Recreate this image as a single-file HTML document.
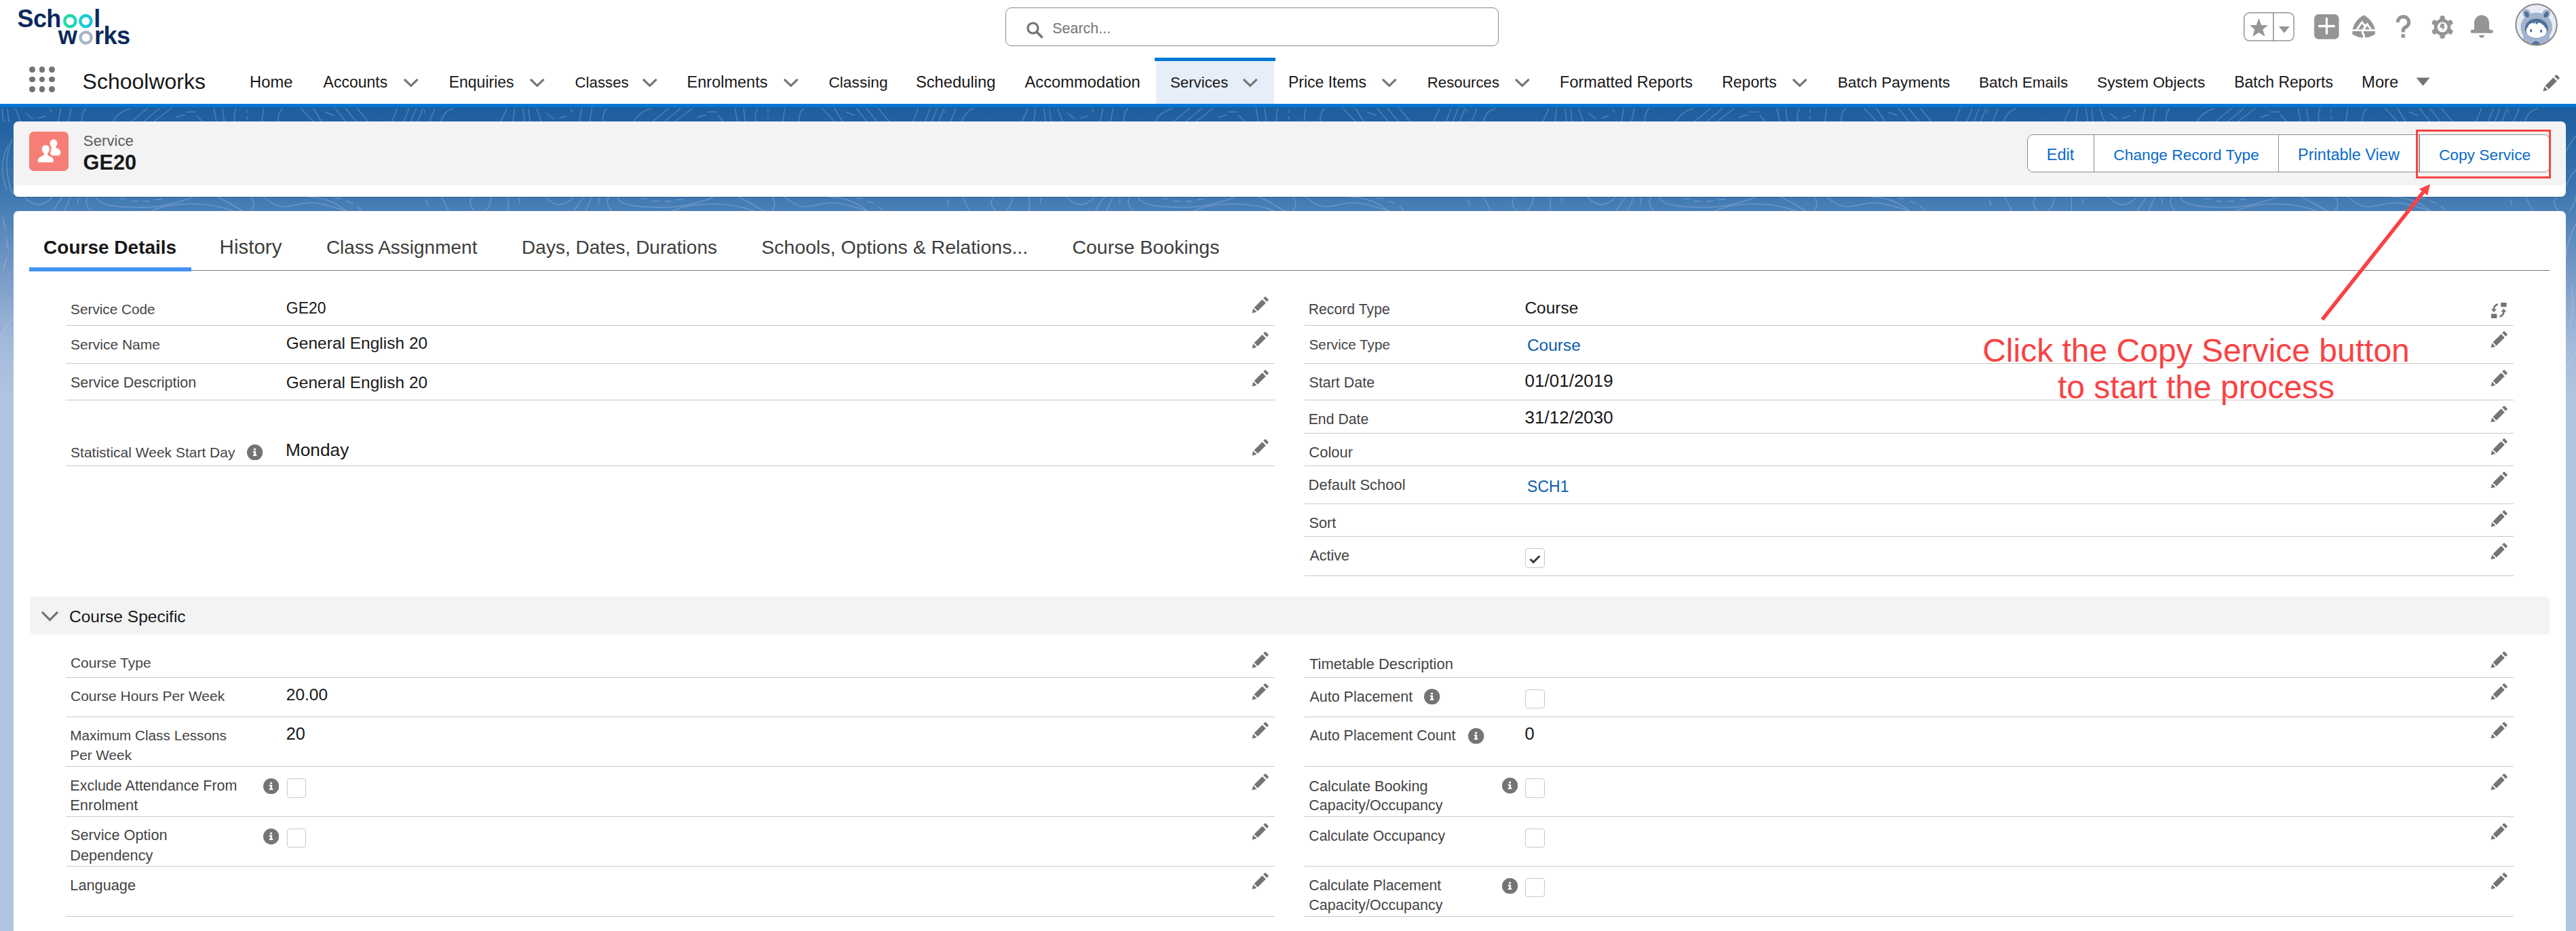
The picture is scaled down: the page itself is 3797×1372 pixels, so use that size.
<!DOCTYPE html>
<html><head><meta charset="utf-8"><title>Service GE20</title>
<style>
html,body{margin:0;padding:0;width:3797px;height:1372px;overflow:hidden;background:#b0c4df;font-family:"Liberation Sans",sans-serif}
.a{position:absolute}
.t{position:absolute;white-space:nowrap;line-height:1}
</style></head><body>
<div class="a" style="left:0;top:158px;width:3797px;height:1214px;background:linear-gradient(180deg,#1d5e9f 0px,#2463a3 30px,#3873ae 110px,#497fb6 150px,#7a9cc8 250px,#a3badb 350px,#b0c4df 420px,#b0c4df 1214px)"></div>
<svg class="a" style="left:0;top:0" width="3797" height="1372" viewBox="0 0 3797 1372"><defs><pattern id="topo" patternUnits="userSpaceOnUse" x="0" y="0" width="768" height="1372"><path d="M3 160 L5 179 M11 161 L13 179 M23 160 L30 179 M38 167 L48 175 M57 174 L67 171 M73 161 L76 165 M89.6 160 L85.8 179 M104.7 160 L101 179 M126 160 Q119 170 121 179 M191.8 160 Q174 165 166.5 179 M217 160 L194 179 M234.7 160 L212 179 M252 160 L227 179 M260 173 L272 169 M275 165 L288 165 M290 170 L298 179 M315.4 160 L319 179 M328 160 L330.6 179 M348 160 Q344 170 346 179 M364 162 L364 166 M364 172 L364 176 M388.6 160 L386 179 M416 160 Q409 168 410 179 M444 160 L462 179 M462 160 L474 179 M479 165 L492 170 M494.6 160 L509.7 179 M509.7 160 L524.8 179 M527 160 L542.5 179 M585.4 160 L577.8 179 M603 160 L595.5 179 M613.2 160 L605.6 179 M623.3 160 L615.7 179 M626 162 L625.5 166 M641 160 L633.3 179 M667.7 160 Q655 163 650 179 M747.1 160 L738.3 179 M758.5 160 L756 179 M35.8 290 Q56.7 313 77.5 290 M79 310 Q86 298 92.4 290 M95.4 310 L104.4 290 M114.8 292 L114.6 301 M129.7 290 Q123 300 134.2 311 M141.6 290 C145 300 160 305 200 305.5 C230 306 250 303 283 291 M177 292.7 L186 292.7 M193.8 296.4 L202.7 296.4 M211.7 296.4 L220.6 296.4 M229.6 294.2 L238.5 293.5 M223.6 311 C240 303 262 300.5 283 300.5 C305 300.5 325 304 343 311 M320.5 290 Q340 300 357.8 311 M369.7 290 Q378 300 369.7 311 M388.5 290 C400 300 410 304.6 418.3 304.6 C428 304.6 436 300.9 455.6 298.7 C470 298 490 304 510.7 311 M454 290 C470 291 490 294 510.7 311 M494 292 L503 292.5 M510.7 296.4 L519.7 299.4 M527 304.6 L533 309.9 M628.5 295 L630.7 303 M650.8 290 L661.3 311 M697 290 Q688 300 700 311 M724 290 Q724 302 715 311 M749.2 290 L749.2 311 M765.6 293 L765.8 299" fill="none" stroke="rgba(205,222,242,0.26)" stroke-width="1.5" stroke-linecap="round"/></pattern></defs><rect x="0" y="156" width="3797" height="160" fill="url(#topo)"/><path d="M18 205 Q2 240 18 285 M12 214 Q-4 245 10 280 M4 320 L8 340 M9 350 L12 368 M10 380 L5 398 M20 470 Q8 480 0 498 M3797 200 Q3785 215 3778 232 M3797 250 Q3786 262 3780 280 M3797 330 Q3784 352 3782 380 M3790 420 Q3795 450 3788 480 M3797 520 Q3788 530 3781 545" fill="none" stroke="rgba(205,222,242,0.28)" stroke-width="1.5"/></svg>
<div class="a" style="left:0;top:0;width:3797px;height:158px;background:#fff"></div>
<div class="t" style="left:25.5px;top:10.0px;font-size:36.0px;color:#0b2a5a;font-weight:700;letter-spacing:-0.6px">Sch</div>
<div class="t" style="left:138.2px;top:10.0px;font-size:36.0px;color:#0b2a5a;font-weight:700;">l</div>
<div class="t" style="left:85.8px;top:35.0px;font-size:36.25px;color:#0b2a5a;font-weight:700;">w</div>
<div class="t" style="left:139.0px;top:35.0px;font-size:36.25px;color:#0b2a5a;font-weight:700;letter-spacing:-0.6px">rks</div>
<svg class="a" style="left:0;top:0" width="200" height="70" viewBox="0 0 200 70">
<defs><linearGradient id="lg1" x1="0" x2="1"><stop offset="0" stop-color="#20dc96"/><stop offset="1" stop-color="#17d6c0"/></linearGradient>
<linearGradient id="lg2" x1="0" x2="1"><stop offset="0" stop-color="#16d3cf"/><stop offset="1" stop-color="#19c4e4"/></linearGradient></defs>
<circle cx="103.3" cy="31.1" r="8.1" fill="none" stroke="url(#lg1)" stroke-width="4.4"/>
<circle cx="126.4" cy="31.1" r="8.1" fill="none" stroke="url(#lg2)" stroke-width="4.4"/>
<circle cx="126.6" cy="55.5" r="8.1" fill="none" stroke="#a7b4c8" stroke-width="4.4"/>
</svg>
<div class="a" style="left:1482px;top:11px;width:727px;height:57px;border:1.5px solid #8c8c8c;border-radius:9px;box-sizing:border-box;background:#fff"></div>
<svg class="a" style="left:1512px;top:31px" width="26" height="26" viewBox="0 0 26 26"><circle cx="10.5" cy="10.5" r="7.5" fill="none" stroke="#747474" stroke-width="3.2"/><line x1="16" y1="16" x2="23.5" y2="23.5" stroke="#747474" stroke-width="3.6" stroke-linecap="round"/></svg>
<div class="t" style="left:1551.2px;top:32.0px;font-size:21.5px;color:#747474;">Search...</div>
<svg class="a" style="left:0;top:0" width="3797" height="80" viewBox="0 0 3797 80">
<rect x="3307.8" y="18.7" width="73.4" height="41.4" rx="8" fill="#fff" stroke="#959595" stroke-width="1.5"/>
<rect x="3350.2" y="18" width="1.6" height="42.6" fill="#959595"/>
<polygon points="3329.45,27.07 3333.2,37.06 3342.85,37.06 3335.3,43.5 3338.66,53.8 3329.45,48 3320.3,53.8 3323.2,43.5 3316.1,37.06 3325.8,37.06" fill="#959595"/>
<polygon points="3359,39 3374.8,39 3366.9,48.8" fill="#959595"/>
<rect x="3411.1" y="21" width="36.5" height="36.7" rx="6.5" fill="#959595"/>
<line x1="3429.5" y1="27.5" x2="3429.5" y2="49.2" stroke="#fff" stroke-width="3.3" stroke-linecap="round"/>
<line x1="3418.6" y1="38.5" x2="3440.4" y2="38.5" stroke="#fff" stroke-width="3.3" stroke-linecap="round"/>
<g transform="translate(3460 15)">
<path d="M24.2 7.3 C31.5 11 38.5 18.5 40.6 28.2 L7.7 28.2 C9.8 18.5 16.9 11 24.2 7.3Z" fill="#959595"/>
<path d="M7.4 31.1 L40.9 31.1 L40.9 35.6 C35 39 29.5 40.8 24.2 40.8 C18.9 40.8 13.4 39 7.4 35.6Z" fill="#959595"/>
<polygon points="12.3,28.3 21.5,15.6 26.3,21.4 29.3,18.6 36.6,28.3" fill="#fff"/>
<polygon points="16.1,28.3 21.5,20.1 24.7,24.2 21.75,28.3" fill="#959595"/>
<polygon points="25.8,28.3 29.3,23.1 32.8,28.3" fill="#959595"/>
<path d="M22.4 30.5 C21.7 33 22.3 34.5 24.2 36.5 C24.7 37.3 24.6 39 24.6 41.5" fill="none" stroke="#fff" stroke-width="3"/>
<path d="M73.9 17.8 C74.6 12.3 78.3 9.6 82.4 9.6 C87.3 9.6 90.6 13.3 90.6 17.8 C90.6 22 88 24 85.6 25.2 C83.3 26.4 82.2 27.9 82.2 30.2 L82.2 32.4" fill="none" stroke="#959595" stroke-width="5.2"/>
<rect x="79.5" y="35.2" width="5.4" height="5.6" rx="1" fill="#959595"/>
</g>
<g transform="translate(3583 22)">
<circle cx="17.1" cy="18" r="12"/>
<rect x="13.4" y="1.1" width="7.4" height="10" rx="3.2" transform="rotate(0 17.1 18)" fill="#959595"/><rect x="13.4" y="1.1" width="7.4" height="10" rx="3.2" transform="rotate(60 17.1 18)" fill="#959595"/><rect x="13.4" y="1.1" width="7.4" height="10" rx="3.2" transform="rotate(120 17.1 18)" fill="#959595"/><rect x="13.4" y="1.1" width="7.4" height="10" rx="3.2" transform="rotate(180 17.1 18)" fill="#959595"/><rect x="13.4" y="1.1" width="7.4" height="10" rx="3.2" transform="rotate(240 17.1 18)" fill="#959595"/><rect x="13.4" y="1.1" width="7.4" height="10" rx="3.2" transform="rotate(300 17.1 18)" fill="#959595"/>
<circle cx="17.1" cy="18" r="12" fill="#959595"/>
<circle cx="17.1" cy="18" r="7.5" fill="#fff"/>
<polygon points="15.1,12.6 20.2,13 18.85,16.9 21.4,17.4 16.2,23.3 17.7,18.8 13.1,18.7" fill="#959595"/>
</g>
<g transform="translate(3640 21)">
<path d="M18 1.25 C24.5 1.25 29 6.5 29 13 L29 21 C29 22.3 29.8 23 31 23 L32.5 23 A2.4 2.4 0 0 1 32.5 27.8 L3.9 27.8 A2.4 2.4 0 0 1 3.9 23 L5 23 C6.2 23 7 22.3 7 21 L7 13 C7 6.5 11.5 1.25 18 1.25Z" fill="#959595"/>
<path d="M14 30.8 L22 30.8 C22 33 20.2 34.8 18 34.8 C15.8 34.8 14 33 14 30.8Z" fill="#959595"/>
</g>
<defs><clipPath id="avc"><circle cx="3738.6" cy="36.4" r="30.2"/></clipPath></defs>
<circle cx="3738.6" cy="36.4" r="30.2" fill="#e8edf4"/>
<g clip-path="url(#avc)">
<ellipse cx="3738.7" cy="40" rx="23.3" ry="21.5" fill="#a3b4cf"/>
<ellipse cx="3724.6" cy="20.5" rx="5.8" ry="7.6" transform="rotate(-28 3724.6 20.5)" fill="#a3b4cf"/>
<ellipse cx="3752.8" cy="21" rx="5.8" ry="7.6" transform="rotate(28 3752.8 21)" fill="#a3b4cf"/>
<path d="M3719 52 L3758.5 52 L3757 70 L3720 70Z" fill="#a3b4cf"/>
<ellipse cx="3724.3" cy="21" rx="3" ry="4.8" transform="rotate(-28 3724.3 21)" fill="#52709a"/>
<ellipse cx="3753.1" cy="21.5" rx="3" ry="4.8" transform="rotate(28 3753.1 21.5)" fill="#52709a"/>
<ellipse cx="3738.7" cy="42" rx="17" ry="14.6" fill="#52709a"/>
<ellipse cx="3738.7" cy="46" rx="15" ry="10" fill="#fff"/>
<path d="M3723.9 45 C3724.5 39 3728 35 3733 33.4 L3736.2 35.8 L3735.4 32.6 C3743 32.3 3750.5 36 3753.5 44 Z" fill="#fff"/>
<path d="M3735.8 32.2 L3741.8 32.9 L3739.3 36.2 Z" fill="#52709a"/>
<path d="M3723.9 40 L3726.5 37 L3726.2 41Z M3753.5 40 L3751 37 L3751.2 41Z" fill="#52709a"/>
<ellipse cx="3730.8" cy="45.2" rx="1.6" ry="2.4" fill="#52709a"/>
<ellipse cx="3745.6" cy="45.8" rx="1.6" ry="2.4" fill="#52709a"/>
<ellipse cx="3737.9" cy="66.8" rx="6.2" ry="6.2" fill="#52709a"/>
</g>
<circle cx="3738.6" cy="36.4" r="30.2" fill="none" stroke="#8a8a8a" stroke-width="2"/>
</svg>
<div class="a" style="left:42.9px;top:97.9px;width:8.8px;height:8.8px;border-radius:50%;background:#747474"></div>
<div class="a" style="left:42.9px;top:112.6px;width:8.8px;height:8.8px;border-radius:50%;background:#747474"></div>
<div class="a" style="left:42.9px;top:127.3px;width:8.8px;height:8.8px;border-radius:50%;background:#747474"></div>
<div class="a" style="left:57.6px;top:97.9px;width:8.8px;height:8.8px;border-radius:50%;background:#747474"></div>
<div class="a" style="left:57.6px;top:112.6px;width:8.8px;height:8.8px;border-radius:50%;background:#747474"></div>
<div class="a" style="left:57.6px;top:127.3px;width:8.8px;height:8.8px;border-radius:50%;background:#747474"></div>
<div class="a" style="left:72.3px;top:97.9px;width:8.8px;height:8.8px;border-radius:50%;background:#747474"></div>
<div class="a" style="left:72.3px;top:112.6px;width:8.8px;height:8.8px;border-radius:50%;background:#747474"></div>
<div class="a" style="left:72.3px;top:127.3px;width:8.8px;height:8.8px;border-radius:50%;background:#747474"></div>
<div class="t" style="left:121.6px;top:104.0px;font-size:32.0px;color:#181818;">Schoolworks</div>
<div class="a" style="left:1703.5px;top:90px;width:174.5px;height:63px;background:#e6eff9"></div>
<div class="a" style="left:1702px;top:85px;width:178px;height:5px;background:#0176d3"></div>
<div class="t" style="left:368.1px;top:109.0px;font-size:23.75px;color:#181818;">Home</div>
<div class="t" style="left:476.6px;top:110.0px;font-size:23.0px;color:#181818;">Accounts</div>
<svg class="a" style="left:592.5px;top:114.1px" width="25.6" height="16.8" viewBox="-2 -2 25.6 16.8"><polyline points="0.96,0.96 10.80,10.40 20.64,0.96" fill="none" stroke="#747474" stroke-width="3.2"/></svg>
<div class="t" style="left:661.7px;top:110.0px;font-size:23.0px;color:#181818;">Enquiries</div>
<svg class="a" style="left:778.5px;top:114.1px" width="25.6" height="16.8" viewBox="-2 -2 25.6 16.8"><polyline points="0.96,0.96 10.80,10.40 20.64,0.96" fill="none" stroke="#747474" stroke-width="3.2"/></svg>
<div class="t" style="left:847.5px;top:111.0px;font-size:22.25px;color:#181818;">Classes</div>
<svg class="a" style="left:944.5px;top:114.1px" width="25.6" height="16.8" viewBox="-2 -2 25.6 16.8"><polyline points="0.96,0.96 10.80,10.40 20.64,0.96" fill="none" stroke="#747474" stroke-width="3.2"/></svg>
<div class="t" style="left:1012.6px;top:110.0px;font-size:23.5px;color:#181818;">Enrolments</div>
<svg class="a" style="left:1153.0px;top:114.1px" width="25.6" height="16.8" viewBox="-2 -2 25.6 16.8"><polyline points="0.96,0.96 10.80,10.40 20.64,0.96" fill="none" stroke="#747474" stroke-width="3.2"/></svg>
<div class="t" style="left:1221.4px;top:110.0px;font-size:22.75px;color:#181818;">Classing</div>
<div class="t" style="left:1349.9px;top:109.0px;font-size:23.75px;color:#181818;">Scheduling</div>
<div class="t" style="left:1510.5px;top:109.0px;font-size:23.75px;color:#181818;">Accommodation</div>
<div class="t" style="left:1725.0px;top:111.0px;font-size:22.25px;color:#181818;">Services</div>
<svg class="a" style="left:1830.0px;top:114.1px" width="25.6" height="16.8" viewBox="-2 -2 25.6 16.8"><polyline points="0.96,0.96 10.80,10.40 20.64,0.96" fill="none" stroke="#747474" stroke-width="3.2"/></svg>
<div class="t" style="left:1898.9px;top:110.0px;font-size:23.0px;color:#181818;">Price Items</div>
<svg class="a" style="left:2035.0px;top:114.1px" width="25.6" height="16.8" viewBox="-2 -2 25.6 16.8"><polyline points="0.96,0.96 10.80,10.40 20.64,0.96" fill="none" stroke="#747474" stroke-width="3.2"/></svg>
<div class="t" style="left:2103.7px;top:111.0px;font-size:22.25px;color:#181818;">Resources</div>
<svg class="a" style="left:2230.5px;top:114.1px" width="25.6" height="16.8" viewBox="-2 -2 25.6 16.8"><polyline points="0.96,0.96 10.80,10.40 20.64,0.96" fill="none" stroke="#747474" stroke-width="3.2"/></svg>
<div class="t" style="left:2299.1px;top:110.0px;font-size:23.5px;color:#181818;">Formatted Reports</div>
<div class="t" style="left:2538.2px;top:110.0px;font-size:23.0px;color:#181818;">Reports</div>
<svg class="a" style="left:2639.5px;top:114.1px" width="25.6" height="16.8" viewBox="-2 -2 25.6 16.8"><polyline points="0.96,0.96 10.80,10.40 20.64,0.96" fill="none" stroke="#747474" stroke-width="3.2"/></svg>
<div class="t" style="left:2708.7px;top:110.0px;font-size:22.75px;color:#181818;">Batch Payments</div>
<div class="t" style="left:2917.0px;top:111.0px;font-size:22.5px;color:#181818;">Batch Emails</div>
<div class="t" style="left:3091.0px;top:110.0px;font-size:22.75px;color:#181818;">System Objects</div>
<div class="t" style="left:3293.2px;top:110.0px;font-size:23.0px;color:#181818;">Batch Reports</div>
<div class="t" style="left:3481.1px;top:109.0px;font-size:23.75px;color:#181818;">More</div>
<svg class="a" style="left:3561px;top:114px" width="21" height="13" viewBox="0 0 21 13"><polygon points="0.5,0.5 20.5,0.5 10.5,12.5" fill="#747474"/></svg>
<svg class="a" style="left:3748px;top:110px" width="25" height="25" viewBox="0 0 25 25"><g fill="#747474"><path d="M0.5 24.5 L2.2 17.6 L7.4 22.8Z"/><path d="M3.6 16.2 L15.6 4.2 L20.8 9.4 L8.8 21.4Z"/><path d="M17.2 2.6 L19.2 0.6 C19.7 0.1 20.4 0.1 20.9 0.6 L24.4 4.1 C24.9 4.6 24.9 5.3 24.4 5.8 L22.4 7.8Z"/></g></svg>
<div class="a" style="left:0px;top:153px;width:3797px;height:5px;background:#0176d3"></div>
<div class="a" style="left:20px;top:179px;width:3762px;height:111px;background:#fff;border-radius:7px;box-shadow:0 2px 2px rgba(0,0,0,0.10)"></div>
<div class="a" style="left:21px;top:179px;width:3760px;height:94px;background:#f3f3f3;border-radius:7px 7px 6px 6px"></div>
<div class="a" style="left:43px;top:194px;width:58px;height:58px;background:#f67e76;border-radius:7px"></div>
<svg class="a" style="left:43px;top:194px" width="58" height="58" viewBox="0 0 58 58"><g fill="#fff"><path d="M36 11.6 C39.2 11.6 41.4 14 41.4 17.2 C41.4 19.5 40.4 21.2 39 22.5 C39 23.2 39.4 23.6 40.2 24 C43.8 25.3 46.3 27 46.3 30.8 C46.3 33.5 45.2 35.2 43.2 35.2 L34 35.2 C32 35.2 31 33.5 31 30.8 C31 27 33 25.3 32.5 24 C32 23.6 33 23.2 33 22.5 C31.6 21.2 30.6 19.5 30.6 17.2 C30.6 14 32.8 11.6 36 11.6Z"/><path d="M24.4 18.5 C28.5 18.5 31.2 21.8 31.2 26 C31.2 29 29.8 31.2 28 32.8 C28 33.5 28.5 34 29.5 34.5 C34 36 37.3 38 37.3 42.5 C37.3 45 36 46.4 34 46.4 L14.8 46.4 C12.8 46.4 11.5 45 11.5 42.5 C11.5 38 14.8 36 19.3 34.5 C20.3 34 20.8 33.5 20.8 32.8 C19 31.2 17.6 29 17.6 26 C17.6 21.8 20.3 18.5 24.4 18.5Z" stroke="#f67e76" stroke-width="2.4"/></g></svg>
<div class="t" style="left:122.8px;top:197.0px;font-size:22.25px;color:#5c5c5c;">Service</div>
<div class="t" style="left:122.6px;top:225.0px;font-size:30.75px;color:#181818;font-weight:700;">GE20</div>
<div class="a" style="left:2988px;top:198px;width:771px;height:56px;background:#fff;border:1.5px solid #8c8c8c;border-radius:9px;box-sizing:border-box"></div>
<div class="a" style="left:3085.5px;top:198px;width:1.5px;height:56px;background:#8c8c8c"></div>
<div class="a" style="left:3357.7px;top:198px;width:1.5px;height:56px;background:#8c8c8c"></div>
<div class="a" style="left:3565.3px;top:198px;width:1.5px;height:56px;background:#8c8c8c"></div>
<div class="t" style="left:3016.8px;top:217.0px;font-size:23.5px;color:#0b6bcb;">Edit</div>
<div class="t" style="left:3115.3px;top:217.0px;font-size:22.75px;color:#0b6bcb;">Change Record Type</div>
<div class="t" style="left:3387.1px;top:217.0px;font-size:23.5px;color:#0b6bcb;">Printable View</div>
<div class="t" style="left:3594.9px;top:217.0px;font-size:22.75px;color:#0b6bcb;">Copy Service</div>
<div class="a" style="left:20px;top:311px;width:3762px;height:1100px;background:#fff;border-radius:7px"></div>
<div class="t" style="left:64.1px;top:351.0px;font-size:28.0px;color:#181818;font-weight:700;">Course Details</div>
<div class="t" style="left:323.6px;top:349.0px;font-size:29.5px;color:#3e3e3c;">History</div>
<div class="t" style="left:480.9px;top:351.0px;font-size:28.0px;color:#3e3e3c;">Class Assignment</div>
<div class="t" style="left:769.1px;top:351.0px;font-size:28.0px;color:#3e3e3c;">Days, Dates, Durations</div>
<div class="t" style="left:1122.3px;top:350.0px;font-size:28.5px;color:#3e3e3c;">Schools, Options &amp; Relations...</div>
<div class="t" style="left:1580.4px;top:350.0px;font-size:28.5px;color:#3e3e3c;">Course Bookings</div>
<div class="a" style="left:43px;top:397.6px;width:3715px;height:1.3999999999999773px;background:#7a7a7a"></div>
<div class="a" style="left:43px;top:394px;width:239px;height:6px;background:#4394f5"></div>
<div class="t" style="left:104.1px;top:446.0px;font-size:20.75px;color:#444444;">Service Code</div>
<div class="t" style="left:421.8px;top:443.0px;font-size:23.0px;color:#181818;">GE20</div>
<div class="a" style="left:97px;top:479px;width:1782px;height:1px;background:#c9c9c9"></div>
<svg class="a" style="left:1845px;top:437px" width="25" height="25" viewBox="0 0 25 25"><g fill="#747474"><path d="M0.5 24.5 L2.2 17.6 L7.4 22.8Z"/><path d="M3.6 16.2 L15.6 4.2 L20.8 9.4 L8.8 21.4Z"/><path d="M17.2 2.6 L19.2 0.6 C19.7 0.1 20.4 0.1 20.9 0.6 L24.4 4.1 C24.9 4.6 24.9 5.3 24.4 5.8 L22.4 7.8Z"/></g></svg>
<div class="t" style="left:104.1px;top:497.0px;font-size:21.0px;color:#444444;">Service Name</div>
<div class="t" style="left:421.8px;top:494.0px;font-size:24.5px;color:#181818;">General English 20</div>
<div class="a" style="left:97px;top:535px;width:1782px;height:1px;background:#c9c9c9"></div>
<svg class="a" style="left:1845px;top:488.6px" width="25" height="25" viewBox="0 0 25 25"><g fill="#747474"><path d="M0.5 24.5 L2.2 17.6 L7.4 22.8Z"/><path d="M3.6 16.2 L15.6 4.2 L20.8 9.4 L8.8 21.4Z"/><path d="M17.2 2.6 L19.2 0.6 C19.7 0.1 20.4 0.1 20.9 0.6 L24.4 4.1 C24.9 4.6 24.9 5.3 24.4 5.8 L22.4 7.8Z"/></g></svg>
<div class="t" style="left:104.0px;top:554.0px;font-size:21.5px;color:#444444;">Service Description</div>
<div class="t" style="left:421.8px;top:552.0px;font-size:24.5px;color:#181818;">General English 20</div>
<div class="a" style="left:97px;top:589px;width:1782px;height:1px;background:#c9c9c9"></div>
<svg class="a" style="left:1845px;top:545px" width="25" height="25" viewBox="0 0 25 25"><g fill="#747474"><path d="M0.5 24.5 L2.2 17.6 L7.4 22.8Z"/><path d="M3.6 16.2 L15.6 4.2 L20.8 9.4 L8.8 21.4Z"/><path d="M17.2 2.6 L19.2 0.6 C19.7 0.1 20.4 0.1 20.9 0.6 L24.4 4.1 C24.9 4.6 24.9 5.3 24.4 5.8 L22.4 7.8Z"/></g></svg>
<div class="t" style="left:104.1px;top:656.0px;font-size:21.0px;color:#444444;">Statistical Week Start Day</div>
<div class="t" style="left:420.9px;top:650.0px;font-size:26.25px;color:#181818;">Monday</div>
<svg class="a" style="left:364.1px;top:654.9px" width="23.4" height="23.4" viewBox="0 0 24 24"><circle cx="12" cy="12" r="12" fill="#747474"/><g fill="#fff"><circle cx="11.9" cy="7.3" r="1.7"/><path d="M9.1 10.1 L13.5 10.1 L13.5 15.4 L14.7 15.4 L14.7 17.4 L9.1 17.4 L9.1 15.4 L10.6 15.4 L10.6 12 L9.1 12Z"/></g></svg>
<div class="a" style="left:97px;top:686px;width:1782px;height:1px;background:#c9c9c9"></div>
<svg class="a" style="left:1845px;top:647px" width="25" height="25" viewBox="0 0 25 25"><g fill="#747474"><path d="M0.5 24.5 L2.2 17.6 L7.4 22.8Z"/><path d="M3.6 16.2 L15.6 4.2 L20.8 9.4 L8.8 21.4Z"/><path d="M17.2 2.6 L19.2 0.6 C19.7 0.1 20.4 0.1 20.9 0.6 L24.4 4.1 C24.9 4.6 24.9 5.3 24.4 5.8 L22.4 7.8Z"/></g></svg>
<div class="t" style="left:1928.7px;top:446.0px;font-size:21.25px;color:#444444;">Record Type</div>
<div class="t" style="left:2247.4px;top:442.0px;font-size:24.5px;color:#181818;">Course</div>
<div class="a" style="left:1923px;top:479px;width:1782px;height:1px;background:#c9c9c9"></div>
<svg class="a" style="left:3671px;top:445px" width="25" height="25" viewBox="0 0 25 25"><g fill="#747474"><rect x="15.3" y="1" width="8.3" height="6.3" rx="0.8"/><rect x="1" y="17.6" width="8.4" height="6.5" rx="0.8"/><path d="M10.8 2.3 L10.8 5.1 C8 5.6 6.4 7.6 6.1 10.6 L8.9 10.6 L5 15.2 L0.8 10.6 L3.6 10.6 C3.9 6.1 6.6 2.9 10.8 2.3Z"/><path d="M13.5 22.7 L13.5 19.9 C16.2 19.5 17.8 17.6 18.1 14.5 L15.3 14.5 L19.4 9.9 L23.5 14.5 L20.7 14.5 C20.4 19 17.7 22.2 13.5 22.7Z"/></g></svg>
<div class="t" style="left:1929.5px;top:498.0px;font-size:20.75px;color:#444444;">Service Type</div>
<div class="t" style="left:2250.9px;top:497.0px;font-size:24.5px;color:#0b5cab;">Course</div>
<div class="a" style="left:1923px;top:535px;width:1782px;height:1px;background:#c9c9c9"></div>
<svg class="a" style="left:3671px;top:488px" width="25" height="25" viewBox="0 0 25 25"><g fill="#747474"><path d="M0.5 24.5 L2.2 17.6 L7.4 22.8Z"/><path d="M3.6 16.2 L15.6 4.2 L20.8 9.4 L8.8 21.4Z"/><path d="M17.2 2.6 L19.2 0.6 C19.7 0.1 20.4 0.1 20.9 0.6 L24.4 4.1 C24.9 4.6 24.9 5.3 24.4 5.8 L22.4 7.8Z"/></g></svg>
<div class="t" style="left:1929.4px;top:554.0px;font-size:21.5px;color:#444444;">Start Date</div>
<div class="t" style="left:2247.6px;top:548.0px;font-size:26.0px;color:#181818;">01/01/2019</div>
<div class="a" style="left:1923px;top:589px;width:1782px;height:1px;background:#c9c9c9"></div>
<svg class="a" style="left:3671px;top:544.5px" width="25" height="25" viewBox="0 0 25 25"><g fill="#747474"><path d="M0.5 24.5 L2.2 17.6 L7.4 22.8Z"/><path d="M3.6 16.2 L15.6 4.2 L20.8 9.4 L8.8 21.4Z"/><path d="M17.2 2.6 L19.2 0.6 C19.7 0.1 20.4 0.1 20.9 0.6 L24.4 4.1 C24.9 4.6 24.9 5.3 24.4 5.8 L22.4 7.8Z"/></g></svg>
<div class="t" style="left:1928.7px;top:608.0px;font-size:21.25px;color:#444444;">End Date</div>
<div class="t" style="left:2247.6px;top:602.0px;font-size:26.0px;color:#181818;">31/12/2030</div>
<div class="a" style="left:1923px;top:638px;width:1782px;height:1px;background:#c9c9c9"></div>
<svg class="a" style="left:3671px;top:597.5px" width="25" height="25" viewBox="0 0 25 25"><g fill="#747474"><path d="M0.5 24.5 L2.2 17.6 L7.4 22.8Z"/><path d="M3.6 16.2 L15.6 4.2 L20.8 9.4 L8.8 21.4Z"/><path d="M17.2 2.6 L19.2 0.6 C19.7 0.1 20.4 0.1 20.9 0.6 L24.4 4.1 C24.9 4.6 24.9 5.3 24.4 5.8 L22.4 7.8Z"/></g></svg>
<div class="t" style="left:1929.3px;top:656.0px;font-size:22.0px;color:#444444;">Colour</div>
<div class="a" style="left:1923px;top:686px;width:1782px;height:1px;background:#c9c9c9"></div>
<svg class="a" style="left:3671px;top:646px" width="25" height="25" viewBox="0 0 25 25"><g fill="#747474"><path d="M0.5 24.5 L2.2 17.6 L7.4 22.8Z"/><path d="M3.6 16.2 L15.6 4.2 L20.8 9.4 L8.8 21.4Z"/><path d="M17.2 2.6 L19.2 0.6 C19.7 0.1 20.4 0.1 20.9 0.6 L24.4 4.1 C24.9 4.6 24.9 5.3 24.4 5.8 L22.4 7.8Z"/></g></svg>
<div class="t" style="left:1928.6px;top:704.0px;font-size:22.0px;color:#444444;">Default School</div>
<div class="t" style="left:2251.1px;top:706.0px;font-size:23.0px;color:#0b5cab;">SCH1</div>
<div class="a" style="left:1923px;top:742px;width:1782px;height:1px;background:#c9c9c9"></div>
<svg class="a" style="left:3671px;top:694.7px" width="25" height="25" viewBox="0 0 25 25"><g fill="#747474"><path d="M0.5 24.5 L2.2 17.6 L7.4 22.8Z"/><path d="M3.6 16.2 L15.6 4.2 L20.8 9.4 L8.8 21.4Z"/><path d="M17.2 2.6 L19.2 0.6 C19.7 0.1 20.4 0.1 20.9 0.6 L24.4 4.1 C24.9 4.6 24.9 5.3 24.4 5.8 L22.4 7.8Z"/></g></svg>
<div class="t" style="left:1929.4px;top:760.0px;font-size:21.75px;color:#444444;">Sort</div>
<div class="a" style="left:1923px;top:790px;width:1782px;height:1px;background:#c9c9c9"></div>
<svg class="a" style="left:3671px;top:751.7px" width="25" height="25" viewBox="0 0 25 25"><g fill="#747474"><path d="M0.5 24.5 L2.2 17.6 L7.4 22.8Z"/><path d="M3.6 16.2 L15.6 4.2 L20.8 9.4 L8.8 21.4Z"/><path d="M17.2 2.6 L19.2 0.6 C19.7 0.1 20.4 0.1 20.9 0.6 L24.4 4.1 C24.9 4.6 24.9 5.3 24.4 5.8 L22.4 7.8Z"/></g></svg>
<div class="t" style="left:1930.4px;top:809.0px;font-size:21.5px;color:#444444;">Active</div>
<div class="a" style="left:2248.3px;top:808.4px;width:28.4px;height:28.4px;border:1.6px solid #c9c9c9;border-radius:4px;box-sizing:border-box;background:#fff"></div>
<svg class="a" style="left:2248.3px;top:808.4px" width="28" height="28" viewBox="0 0 28 28"><polyline points="7.6,16 12.2,20.6 21.4,11.2" fill="none" stroke="#3a3a3a" stroke-width="3"/></svg>
<div class="a" style="left:1923px;top:848px;width:1782px;height:1px;background:#c9c9c9"></div>
<svg class="a" style="left:3671px;top:799.7px" width="25" height="25" viewBox="0 0 25 25"><g fill="#747474"><path d="M0.5 24.5 L2.2 17.6 L7.4 22.8Z"/><path d="M3.6 16.2 L15.6 4.2 L20.8 9.4 L8.8 21.4Z"/><path d="M17.2 2.6 L19.2 0.6 C19.7 0.1 20.4 0.1 20.9 0.6 L24.4 4.1 C24.9 4.6 24.9 5.3 24.4 5.8 L22.4 7.8Z"/></g></svg>
<div class="a" style="left:44px;top:879px;width:3714px;height:56px;background:#f3f3f3;border-radius:5px"></div>
<svg class="a" style="left:59px;top:899px" width="29" height="19" viewBox="-2 -2 29 19"><polyline points="0.96,0.96 12.50,12.60 24.04,0.96" fill="none" stroke="#747474" stroke-width="3.2"/></svg>
<div class="t" style="left:102.0px;top:897.0px;font-size:24.5px;color:#181818;">Course Specific</div>
<div class="t" style="left:103.9px;top:966.0px;font-size:21.0px;color:#444444;">Course Type</div>
<div class="a" style="left:97px;top:998px;width:1782px;height:1px;background:#c9c9c9"></div>
<svg class="a" style="left:1845px;top:959.5px" width="25" height="25" viewBox="0 0 25 25"><g fill="#747474"><path d="M0.5 24.5 L2.2 17.6 L7.4 22.8Z"/><path d="M3.6 16.2 L15.6 4.2 L20.8 9.4 L8.8 21.4Z"/><path d="M17.2 2.6 L19.2 0.6 C19.7 0.1 20.4 0.1 20.9 0.6 L24.4 4.1 C24.9 4.6 24.9 5.3 24.4 5.8 L22.4 7.8Z"/></g></svg>
<div class="t" style="left:104.0px;top:1015.0px;font-size:21.0px;color:#444444;">Course Hours Per Week</div>
<div class="t" style="left:421.8px;top:1012.0px;font-size:24.5px;color:#181818;">20.00</div>
<div class="a" style="left:97px;top:1056px;width:1782px;height:1px;background:#c9c9c9"></div>
<svg class="a" style="left:1845px;top:1007.3px" width="25" height="25" viewBox="0 0 25 25"><g fill="#747474"><path d="M0.5 24.5 L2.2 17.6 L7.4 22.8Z"/><path d="M3.6 16.2 L15.6 4.2 L20.8 9.4 L8.8 21.4Z"/><path d="M17.2 2.6 L19.2 0.6 C19.7 0.1 20.4 0.1 20.9 0.6 L24.4 4.1 C24.9 4.6 24.9 5.3 24.4 5.8 L22.4 7.8Z"/></g></svg>
<div class="t" style="left:103.3px;top:1074.0px;font-size:20.75px;color:#444444;">Maximum Class Lessons</div>
<div class="t" style="left:103.3px;top:1103.0px;font-size:20.75px;color:#444444;">Per Week</div>
<div class="t" style="left:421.7px;top:1069.0px;font-size:25.25px;color:#181818;">20</div>
<div class="a" style="left:97px;top:1129px;width:1782px;height:1px;background:#c9c9c9"></div>
<svg class="a" style="left:1845px;top:1064.4px" width="25" height="25" viewBox="0 0 25 25"><g fill="#747474"><path d="M0.5 24.5 L2.2 17.6 L7.4 22.8Z"/><path d="M3.6 16.2 L15.6 4.2 L20.8 9.4 L8.8 21.4Z"/><path d="M17.2 2.6 L19.2 0.6 C19.7 0.1 20.4 0.1 20.9 0.6 L24.4 4.1 C24.9 4.6 24.9 5.3 24.4 5.8 L22.4 7.8Z"/></g></svg>
<div class="t" style="left:103.3px;top:1148.0px;font-size:21.5px;color:#444444;">Exclude Attendance From</div>
<div class="t" style="left:103.2px;top:1176.0px;font-size:22.0px;color:#444444;">Enrolment</div>
<svg class="a" style="left:388.0px;top:1146.9px" width="23.4" height="23.4" viewBox="0 0 24 24"><circle cx="12" cy="12" r="12" fill="#747474"/><g fill="#fff"><circle cx="11.9" cy="7.3" r="1.7"/><path d="M9.1 10.1 L13.5 10.1 L13.5 15.4 L14.7 15.4 L14.7 17.4 L9.1 17.4 L9.1 15.4 L10.6 15.4 L10.6 12 L9.1 12Z"/></g></svg>
<div class="a" style="left:422.7px;top:1147.2px;width:28.4px;height:28.4px;border:1.6px solid #c9c9c9;border-radius:4px;box-sizing:border-box;background:#fff"></div>
<div class="a" style="left:97px;top:1203px;width:1782px;height:1px;background:#c9c9c9"></div>
<svg class="a" style="left:1845px;top:1139.5px" width="25" height="25" viewBox="0 0 25 25"><g fill="#747474"><path d="M0.5 24.5 L2.2 17.6 L7.4 22.8Z"/><path d="M3.6 16.2 L15.6 4.2 L20.8 9.4 L8.8 21.4Z"/><path d="M17.2 2.6 L19.2 0.6 C19.7 0.1 20.4 0.1 20.9 0.6 L24.4 4.1 C24.9 4.6 24.9 5.3 24.4 5.8 L22.4 7.8Z"/></g></svg>
<div class="t" style="left:104.0px;top:1220.0px;font-size:21.75px;color:#444444;">Service Option</div>
<div class="t" style="left:103.3px;top:1250.0px;font-size:21.75px;color:#444444;">Dependency</div>
<svg class="a" style="left:388.0px;top:1221.3px" width="23.4" height="23.4" viewBox="0 0 24 24"><circle cx="12" cy="12" r="12" fill="#747474"/><g fill="#fff"><circle cx="11.9" cy="7.3" r="1.7"/><path d="M9.1 10.1 L13.5 10.1 L13.5 15.4 L14.7 15.4 L14.7 17.4 L9.1 17.4 L9.1 15.4 L10.6 15.4 L10.6 12 L9.1 12Z"/></g></svg>
<div class="a" style="left:422.7px;top:1221.0px;width:28.4px;height:28.4px;border:1.6px solid #c9c9c9;border-radius:4px;box-sizing:border-box;background:#fff"></div>
<div class="a" style="left:97px;top:1276px;width:1782px;height:1px;background:#c9c9c9"></div>
<svg class="a" style="left:1845px;top:1213px" width="25" height="25" viewBox="0 0 25 25"><g fill="#747474"><path d="M0.5 24.5 L2.2 17.6 L7.4 22.8Z"/><path d="M3.6 16.2 L15.6 4.2 L20.8 9.4 L8.8 21.4Z"/><path d="M17.2 2.6 L19.2 0.6 C19.7 0.1 20.4 0.1 20.9 0.6 L24.4 4.1 C24.9 4.6 24.9 5.3 24.4 5.8 L22.4 7.8Z"/></g></svg>
<div class="t" style="left:103.3px;top:1294.0px;font-size:21.75px;color:#444444;">Language</div>
<div class="a" style="left:97px;top:1350px;width:1782px;height:1px;background:#c9c9c9"></div>
<svg class="a" style="left:1845px;top:1285.7px" width="25" height="25" viewBox="0 0 25 25"><g fill="#747474"><path d="M0.5 24.5 L2.2 17.6 L7.4 22.8Z"/><path d="M3.6 16.2 L15.6 4.2 L20.8 9.4 L8.8 21.4Z"/><path d="M17.2 2.6 L19.2 0.6 C19.7 0.1 20.4 0.1 20.9 0.6 L24.4 4.1 C24.9 4.6 24.9 5.3 24.4 5.8 L22.4 7.8Z"/></g></svg>
<div class="t" style="left:1930.0px;top:968.0px;font-size:22.0px;color:#444444;">Timetable Description</div>
<div class="a" style="left:1923px;top:998px;width:1782px;height:1px;background:#c9c9c9"></div>
<svg class="a" style="left:3671px;top:959.5px" width="25" height="25" viewBox="0 0 25 25"><g fill="#747474"><path d="M0.5 24.5 L2.2 17.6 L7.4 22.8Z"/><path d="M3.6 16.2 L15.6 4.2 L20.8 9.4 L8.8 21.4Z"/><path d="M17.2 2.6 L19.2 0.6 C19.7 0.1 20.4 0.1 20.9 0.6 L24.4 4.1 C24.9 4.6 24.9 5.3 24.4 5.8 L22.4 7.8Z"/></g></svg>
<div class="t" style="left:1930.4px;top:1017.0px;font-size:21.5px;color:#444444;">Auto Placement</div>
<svg class="a" style="left:2099.2px;top:1015.1px" width="23.4" height="23.4" viewBox="0 0 24 24"><circle cx="12" cy="12" r="12" fill="#747474"/><g fill="#fff"><circle cx="11.9" cy="7.3" r="1.7"/><path d="M9.1 10.1 L13.5 10.1 L13.5 15.4 L14.7 15.4 L14.7 17.4 L9.1 17.4 L9.1 15.4 L10.6 15.4 L10.6 12 L9.1 12Z"/></g></svg>
<div class="a" style="left:2248.3px;top:1015.6px;width:28.4px;height:28.4px;border:1.6px solid #c9c9c9;border-radius:4px;box-sizing:border-box;background:#fff"></div>
<div class="a" style="left:1923px;top:1056px;width:1782px;height:1px;background:#c9c9c9"></div>
<svg class="a" style="left:3671px;top:1007.3px" width="25" height="25" viewBox="0 0 25 25"><g fill="#747474"><path d="M0.5 24.5 L2.2 17.6 L7.4 22.8Z"/><path d="M3.6 16.2 L15.6 4.2 L20.8 9.4 L8.8 21.4Z"/><path d="M17.2 2.6 L19.2 0.6 C19.7 0.1 20.4 0.1 20.9 0.6 L24.4 4.1 C24.9 4.6 24.9 5.3 24.4 5.8 L22.4 7.8Z"/></g></svg>
<div class="t" style="left:1930.4px;top:1074.0px;font-size:21.5px;color:#444444;">Auto Placement Count</div>
<div class="t" style="left:2247.6px;top:1069.0px;font-size:25.5px;color:#181818;">0</div>
<svg class="a" style="left:2164.2px;top:1073.1px" width="23.4" height="23.4" viewBox="0 0 24 24"><circle cx="12" cy="12" r="12" fill="#747474"/><g fill="#fff"><circle cx="11.9" cy="7.3" r="1.7"/><path d="M9.1 10.1 L13.5 10.1 L13.5 15.4 L14.7 15.4 L14.7 17.4 L9.1 17.4 L9.1 15.4 L10.6 15.4 L10.6 12 L9.1 12Z"/></g></svg>
<div class="a" style="left:1923px;top:1129px;width:1782px;height:1px;background:#c9c9c9"></div>
<svg class="a" style="left:3671px;top:1064.4px" width="25" height="25" viewBox="0 0 25 25"><g fill="#747474"><path d="M0.5 24.5 L2.2 17.6 L7.4 22.8Z"/><path d="M3.6 16.2 L15.6 4.2 L20.8 9.4 L8.8 21.4Z"/><path d="M17.2 2.6 L19.2 0.6 C19.7 0.1 20.4 0.1 20.9 0.6 L24.4 4.1 C24.9 4.6 24.9 5.3 24.4 5.8 L22.4 7.8Z"/></g></svg>
<div class="t" style="left:1929.3px;top:1148.0px;font-size:21.75px;color:#444444;">Calculate Booking</div>
<div class="t" style="left:1929.3px;top:1177.0px;font-size:21.5px;color:#444444;">Capacity/Occupancy</div>
<svg class="a" style="left:2213.8px;top:1146.3px" width="23.4" height="23.4" viewBox="0 0 24 24"><circle cx="12" cy="12" r="12" fill="#747474"/><g fill="#fff"><circle cx="11.9" cy="7.3" r="1.7"/><path d="M9.1 10.1 L13.5 10.1 L13.5 15.4 L14.7 15.4 L14.7 17.4 L9.1 17.4 L9.1 15.4 L10.6 15.4 L10.6 12 L9.1 12Z"/></g></svg>
<div class="a" style="left:2248.3px;top:1147.4px;width:28.4px;height:28.4px;border:1.6px solid #c9c9c9;border-radius:4px;box-sizing:border-box;background:#fff"></div>
<div class="a" style="left:1923px;top:1203px;width:1782px;height:1px;background:#c9c9c9"></div>
<svg class="a" style="left:3671px;top:1139.5px" width="25" height="25" viewBox="0 0 25 25"><g fill="#747474"><path d="M0.5 24.5 L2.2 17.6 L7.4 22.8Z"/><path d="M3.6 16.2 L15.6 4.2 L20.8 9.4 L8.8 21.4Z"/><path d="M17.2 2.6 L19.2 0.6 C19.7 0.1 20.4 0.1 20.9 0.6 L24.4 4.1 C24.9 4.6 24.9 5.3 24.4 5.8 L22.4 7.8Z"/></g></svg>
<div class="t" style="left:1929.3px;top:1222.0px;font-size:21.25px;color:#444444;">Calculate Occupancy</div>
<div class="a" style="left:2248.3px;top:1220.7px;width:28.4px;height:28.4px;border:1.6px solid #c9c9c9;border-radius:4px;box-sizing:border-box;background:#fff"></div>
<div class="a" style="left:1923px;top:1276px;width:1782px;height:1px;background:#c9c9c9"></div>
<svg class="a" style="left:3671px;top:1213px" width="25" height="25" viewBox="0 0 25 25"><g fill="#747474"><path d="M0.5 24.5 L2.2 17.6 L7.4 22.8Z"/><path d="M3.6 16.2 L15.6 4.2 L20.8 9.4 L8.8 21.4Z"/><path d="M17.2 2.6 L19.2 0.6 C19.7 0.1 20.4 0.1 20.9 0.6 L24.4 4.1 C24.9 4.6 24.9 5.3 24.4 5.8 L22.4 7.8Z"/></g></svg>
<div class="t" style="left:1929.3px;top:1295.0px;font-size:21.25px;color:#444444;">Calculate Placement</div>
<div class="t" style="left:1929.3px;top:1324.0px;font-size:21.5px;color:#444444;">Capacity/Occupancy</div>
<svg class="a" style="left:2213.8px;top:1293.5px" width="23.4" height="23.4" viewBox="0 0 24 24"><circle cx="12" cy="12" r="12" fill="#747474"/><g fill="#fff"><circle cx="11.9" cy="7.3" r="1.7"/><path d="M9.1 10.1 L13.5 10.1 L13.5 15.4 L14.7 15.4 L14.7 17.4 L9.1 17.4 L9.1 15.4 L10.6 15.4 L10.6 12 L9.1 12Z"/></g></svg>
<div class="a" style="left:2248.3px;top:1294.0px;width:28.4px;height:28.4px;border:1.6px solid #c9c9c9;border-radius:4px;box-sizing:border-box;background:#fff"></div>
<div class="a" style="left:1923px;top:1350px;width:1782px;height:1px;background:#c9c9c9"></div>
<svg class="a" style="left:3671px;top:1285.7px" width="25" height="25" viewBox="0 0 25 25"><g fill="#747474"><path d="M0.5 24.5 L2.2 17.6 L7.4 22.8Z"/><path d="M3.6 16.2 L15.6 4.2 L20.8 9.4 L8.8 21.4Z"/><path d="M17.2 2.6 L19.2 0.6 C19.7 0.1 20.4 0.1 20.9 0.6 L24.4 4.1 C24.9 4.6 24.9 5.3 24.4 5.8 L22.4 7.8Z"/></g></svg>
<div class="a" style="left:3561px;top:190.5px;width:199px;height:72.5px;border:3px solid #f94244;box-sizing:border-box"></div>
<div class="t" style="left:2737px;top:493.0px;width:1000px;text-align:center;font-size:48px;color:#f94244;line-height:1">Click the Copy Service button</div>
<div class="t" style="left:2737px;top:547.0px;width:1000px;text-align:center;font-size:48px;color:#f94244;line-height:1">to start the process</div>
<svg class="a" style="left:0;top:0" width="3797" height="1372" viewBox="0 0 3797 1372"><line x1="3423" y1="471" x2="3572" y2="283" stroke="#f94244" stroke-width="5.5"/><polygon points="3582,271.5 3566,278.5 3578,288" fill="#f94244"/></svg>
</body></html>
